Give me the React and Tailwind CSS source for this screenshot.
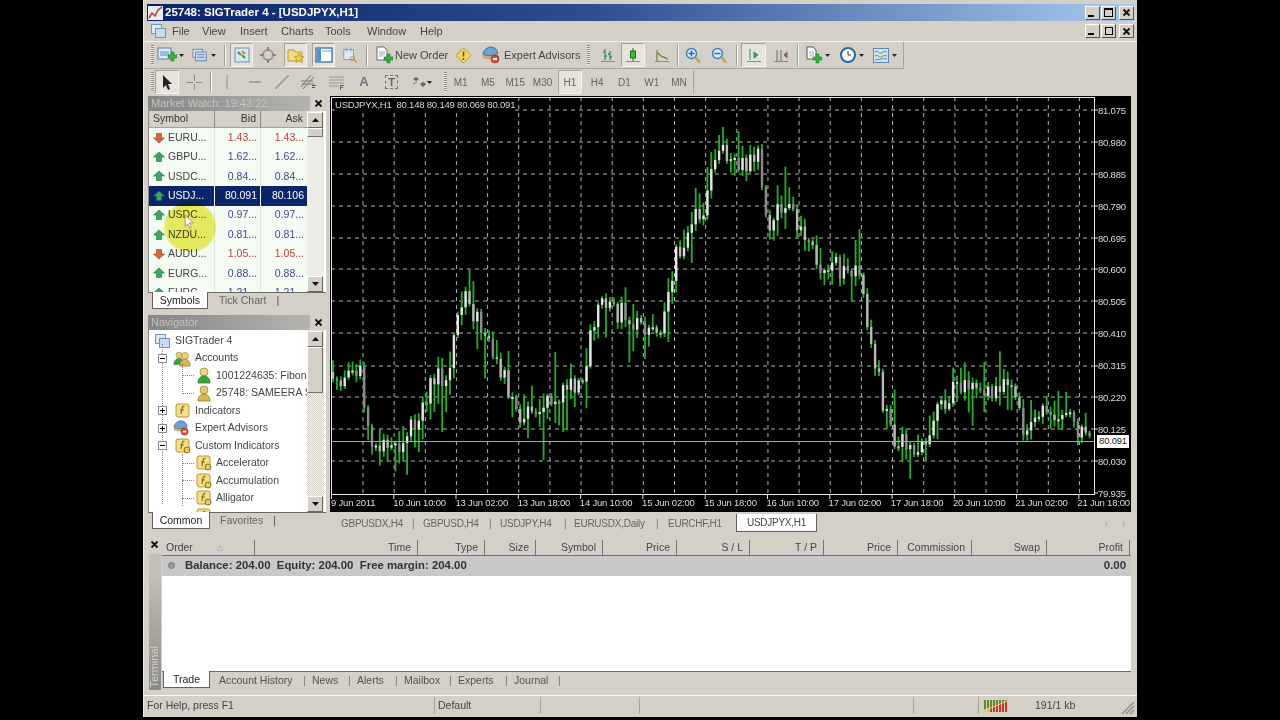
import React from "react";

const F = { fontFamily: '"Liberation Sans", Arial, sans-serif' };

/* ---------- chart data ---------- */
const KEY = [[0,275],[13,285],[28,272],[40,340],[63,350],[83,325],[98,290],[118,275],[133,195],[148,225],[168,265],[188,315],[213,305],[238,295],[253,275],[268,205],[288,215],[308,225],[328,235],[343,165],[363,125],[373,110],[388,45],[408,75],[428,60],[438,130],[458,105],[468,135],[488,170],[508,170],[528,175],[543,255],[558,335],[578,355],[598,335],[613,305],[633,280],[653,300],[678,285],[693,330],[718,315],[738,325],[758,340]];
function priceAt(x) {
  for (let i = 0; i < KEY.length - 1; i++) {
    const [a, p] = KEY[i], [b, q] = KEY[i + 1];
    if (x >= a && x <= b) return p + ((q - p) * (x - a)) / (b - a);
  }
  return 340;
}
function buildCandles() {
  let s = 90817;
  const r = () => ((s = (s * 16807) % 2147483647) / 2147483647);
  const out = [];
  let prev = priceAt(0);
  for (let x = 2; x < 760; x += 3.9) {
    const c = priceAt(x) + (r() - 0.5) * 24;
    const top = Math.min(prev, c);
    const bh = Math.max(2, Math.abs(prev - c));
    const up = 2 + r() * r() * r() * 60;
    const dn = 2 + r() * r() * r() * 56;
    out.push({ x, top, bh, hi: top - up, lo: top + bh + dn, bull: c < prev, g: r() });
    prev = c;
  }
  return out;
}
const CANDLES = buildCandles();
const VX = Array.from({ length: 24 }, (_, i) => 32 + i * 31.15);
const HY = [13, 45, 77, 109, 141, 172, 204, 236, 269, 300, 332, 364];

function Chart() {
  return (
    <svg width="764" height="398" className="block overflow-visible">
      <rect width="764" height="398" fill="#000" />
      {VX.map((x) => (
        <line key={x} x1={x} x2={x} y1="0" y2="398" stroke="#b4b4b4" strokeDasharray="4 4" />
      ))}
      {HY.map((y) => (
        <line key={y} x1="0" x2="764" y1={y} y2={y} stroke="#b4b4b4" strokeDasharray="4 4" />
      ))}
      {CANDLES.map((c, i) => (
        <line key={i} x1={c.x} x2={c.x} y1={c.hi} y2={c.lo} stroke="#1fb02a" strokeWidth="1.8" />
      ))}
      {CANDLES.map((c, i) => (
        <rect key={i} x={c.x - 1.2} y={c.top} width="2.4" height={c.bh} fill={c.bull ? "#e6e6e6" : c.g > 0.5 ? "#8c8c8c" : "#b8b8b8"} />
      ))}
      <line x1="0" x2="764" y1="344.5" y2="344.5" stroke="#a8a8a8" />
      <line x1="0.5" x2="0.5" y1="0" y2="398" stroke="#e8e8e8" />
      <line x1="0" x2="764" y1="0.5" y2="0.5" stroke="#e8e8e8" />
      <line x1="763.5" x2="763.5" y1="0" y2="398" stroke="#e8e8e8" />
      <line x1="0" x2="764" y1="397.5" y2="397.5" stroke="#e8e8e8" />
      {[0.5, 62.8, 125, 187.3, 249.6, 311.9, 374.2, 436.5, 498.8, 561, 623.3, 685.6, 747.9].map((x) => (
        <line key={x} x1={x} x2={x} y1="398" y2="402" stroke="#e8e8e8" />
      ))}
      {[13, 45, 77, 109, 141, 172, 204, 236, 269, 300, 332, 364, 396].map((y) => (
        <line key={y} x1="764" x2="767" y1={y} y2={y} stroke="#e8e8e8" />
      ))}
    </svg>
  );
}

/* ---------- icons ---------- */
const Caret = () => (
  <svg width="5" height="3" className="shrink-0"><path d="M0 0h5L2.5 3z" fill="#222" /></svg>
);
const Sep = ({ className = "" }) => <div className={`w-[2px] h-[21px] shrink-0 border-l border-r border-l-[#a09c94] border-r-white ${className}`} />;
const Grip = ({ className = "" }) => <div className={`w-[3px] h-[20px] shrink-0 bg-[repeating-linear-gradient(#8d8a82_0_1px,#eeeae2_1px_2px)] ${className}`} />;
const NewChart = () => (
  <svg width="20" height="18" viewBox="0 0 20 18">
    <rect x="1" y="2" width="13" height="11" fill="#dfe9f7" stroke="#5a7fae" />
    <rect x="3" y="5" width="9" height="5" fill="#9cbbe0" />
    <path d="M11 9h3V6h3v3h3v3h-3v3h-3v-3h-3z" fill="#35b535" stroke="#1b7a1b" strokeWidth=".6" />
  </svg>
);
const Profiles = () => (
  <svg width="16" height="15" viewBox="0 0 18 16">
    <rect x="1" y="1" width="11" height="9" fill="#dce7f6" stroke="#5a7fae" />
    <rect x="4" y="4" width="12" height="10" fill="#c5d6ee" stroke="#5a7fae" />
    <path d="M6 7h8M6 10h8" stroke="#5a7fae" />
  </svg>
);
const MarketIcon = () => (
  <svg width="16" height="16" viewBox="0 0 16 16">
    <rect x="1" y="1" width="14" height="14" fill="#d6e6f7" stroke="#6b8fb8" />
    <path d="M4 5l3 3M8 8l3 3" stroke="#2e9e2e" strokeWidth="2" />
    <path d="M8 4l3 3" stroke="#d8862a" strokeWidth="2" />
  </svg>
);
const Target = () => (
  <svg width="16" height="16" viewBox="0 0 16 16">
    <circle cx="8" cy="8" r="5" fill="none" stroke="#9a9a92" strokeWidth="2" />
    <path d="M8 0v4M8 12v4M0 8h4M12 8h4" stroke="#8a867d" strokeWidth="2" />
  </svg>
);
const FolderStar = () => (
  <svg width="18" height="17" viewBox="0 0 18 17">
    <path d="M1 3h6l1 2h7v9H1z" fill="#f2dd86" stroke="#b59a3a" />
    <path d="M12 6l1.6 3.2 3.4.5-2.5 2.4.6 3.4-3.1-1.6-3.1 1.6.6-3.4L7 9.7l3.4-.5z" fill="#f5c83c" stroke="#a8861e" strokeWidth=".6" />
  </svg>
);
const PanelIcon = () => (
  <svg width="18" height="16" viewBox="0 0 18 16">
    <rect x="1" y="1" width="16" height="14" fill="#fff" stroke="#3f76ad" strokeWidth="1.4" />
    <rect x="2" y="2" width="4" height="12" fill="#4f92cf" />
    <rect x="7" y="3" width="9" height="2" fill="#b9d2ec" />
  </svg>
);
const NoteIcon = () => (
  <svg width="18" height="18" viewBox="0 0 18 18">
    <rect x="2" y="3" width="11" height="11" fill="#dbe7f5" stroke="#7a98bd" />
    <path d="M5 1v4M10 1v4" stroke="#7a98bd" />
    <circle cx="12" cy="13" r="2.5" fill="none" stroke="#b9943b" />
    <path d="M14 15l2.500 2.500" stroke="#b9943b" strokeWidth="1.5" />
  </svg>
);
const NewOrder = () => (
  <svg width="18" height="18" viewBox="0 0 18 18">
    <path d="M2 1h7l3 3v10H2z" fill="#fff" stroke="#6d6d6d" />
    <path d="M4 6h6M4 8h6M4 10h4" stroke="#99aaaa" />
    <path d="M9 11h3V8h3v3h3v3h-3v3h-3v-3H9z" fill="#2eb33a" stroke="#1a7a22" strokeWidth=".6" />
  </svg>
);
const Warn = () => (
  <svg width="17" height="17" viewBox="0 0 17 17">
    <path d="M8.500 1L16 8.500 8.500 16 1 8.500z" fill="#f5d65a" stroke="#b89a2d" />
    <path d="M8.500 4.500v5M8.500 11v2" stroke="#6a5410" strokeWidth="1.6" />
  </svg>
);
const Expert = ({ size = 18 }) => (
  <svg width={size} height={size} viewBox="0 0 18 18">
    <path d="M1 8c1-5 5-7 8-7s6 2 7 6c-4 3-10 4-15 1z" fill="#6aa3d8" stroke="#3f6f9e" />
    <path d="M2 9c4 2 9 2 13-1l1 2c-4 3-10 3-15 1z" fill="#e5c35c" stroke="#9c7f22" strokeWidth=".6" />
    <circle cx="13" cy="13" r="4" fill="#d84a32" stroke="#8c2a18" strokeWidth=".6" />
    <rect x="11" y="12" width="4" height="2" fill="#fff" />
  </svg>
);
const Bars = ({ kind }) => (
  <svg width="14" height="15" viewBox="0 0 14 15">
    {kind === "bar" && <path d="M4 1v11M2 4h2M4 8h2M9 3v9M7 6h2M9 9h2" stroke="#2f8f6a" fill="none" strokeWidth="1.3" />}
    {kind === "candle" && <path d="M7 0v13" stroke="#2b6e2b" />}
    {kind === "candle" && <rect x="4.500" y="3" width="5" height="7" fill="#35c235" stroke="#1f6a1f" />}
    {kind === "line" && <path d="M2 2v11M2 5c3 0 3 4 6 4s2 2 5 2" stroke="#7a8a35" fill="none" strokeWidth="1.3" />}
    {kind === "shift" && <path d="M3 1v11M7 4l4 3-4 3z" stroke="#2f8f6a" fill="#2fa84f" strokeWidth="1" />}
    {kind === "auto" && <path d="M3 2v11M7 2v11M13 4l-3 3 3 3z" stroke="#6c6c6c" fill="#c8473a" strokeWidth="1" />}
    <path d="M0 13.500h14" stroke="#8a8a82" />
  </svg>
);
const Zoom = ({ plus }) => (
  <svg width="16" height="17" viewBox="0 0 16 17">
    <circle cx="6.500" cy="6.500" r="5" fill="#d7ecfa" stroke="#3a83bd" strokeWidth="1.5" />
    <path d="M3.500 6.500h6" stroke="#2d6ea6" strokeWidth="1.5" />
    {plus && <path d="M6.500 3.500v6" stroke="#2d6ea6" strokeWidth="1.5" />}
    <path d="M10.500 10.500l4.500 5" stroke="#c2a24a" strokeWidth="2.4" />
  </svg>
);
const DocPlus = () => (
  <svg width="16" height="18" viewBox="0 0 16 18">
    <path d="M1 1h6l3 3v9H1z" fill="#fff" stroke="#555" />
    <path d="M3 5h5v6H3z" fill="#d6d6d6" />
    <path d="M7 11h3V8h3v3h3v3h-3v3h-3v-3H7z" fill="#2eb33a" stroke="#1a7a22" strokeWidth=".5" />
  </svg>
);
const Clock = () => (
  <svg width="16" height="16" viewBox="0 0 16 16">
    <circle cx="8" cy="8" r="7" fill="#fff" stroke="#23689f" strokeWidth="2" />
    <path d="M8 4v4h3" stroke="#333" fill="none" />
  </svg>
);
const Tmpl = () => (
  <svg width="16" height="15" viewBox="0 0 16 15">
    <rect x=".5" y=".5" width="15" height="14" fill="#cfe2f5" stroke="#5f88b5" />
    <path d="M2 4c3-2 4 2 6 1s3-2 6-1M2 8c3-2 4 2 6 1s3-2 6-1M2 12c3-1 4 0 6-1s3 0 6 0" fill="none" stroke="#6a8d5c" />
  </svg>
);
const Pressed = ({ className = "", children }) => (
  <div className={`h-[24px] flex items-center justify-center shrink-0 bg-[#e6e3dc] border border-t-[#a5a29a] border-l-[#a5a29a] border-r-[#f4f2ec] border-b-[#f4f2ec] ${className}`}>{children}</div>
);
const Cell = ({ className = "", children }) => (
  <div className={`flex items-center justify-center shrink-0 ${className}`}>{children}</div>
);
const Arrow = ({ up }) => (
  <svg width="12" height="12" viewBox="0 0 12 12" className="shrink-0">
    {up ? <path d="M6 1l5.500 5H8.500v4.500h-5V6H.5z" fill="#3aa860" stroke="#1e6e38" strokeWidth=".6" /> : <path d="M6 11l5.500-5H8.500V1.500h-5V6H.5z" fill="#e0633c" stroke="#97391c" strokeWidth=".6" />}
  </svg>
);
const ScrollBtn = ({ up }) => (
  <div className="w-[16px] h-[16px] bg-[#d4d0c8] border border-t-white border-l-white border-r-[#6d6a63] border-b-[#6d6a63] flex items-center justify-center shrink-0">
    <svg width="7" height="4"><path d={up ? "M0 4h7L3.500 0z" : "M0 0h7L3.500 4z"} fill="#111" /></svg>
  </div>
);
const Folder = ({ f = true, gear }) => (
  <svg width="16" height="16" viewBox="0 0 16 16" className="shrink-0">
    <rect x="1" y="1" width="13" height="13" rx="2" fill="#f3df8a" stroke="#b9982f" />
    {f && <path d="M9.500 3.500C7.500 3 7 4.500 6.800 6.500L6 11M5 7h4" fill="none" stroke="#8a6d15" strokeWidth="1.2" />}
    {gear && <circle cx="12" cy="12" r="3" fill="#e8c850" stroke="#8a6d15" />}
  </svg>
);
const Person = ({ green }) => (
  <svg width="16" height="17" viewBox="0 0 16 17" className="shrink-0">
    <circle cx="8" cy="5" r="4" fill={green ? "#f2d27a" : "#e9c66c"} stroke="#9a7a24" strokeWidth=".7" />
    <path d="M2 16c0-5 3-7 6-7s6 2 6 7z" fill={green ? "#38a83e" : "#d9b552"} stroke={green ? "#1d6e22" : "#8e6f1f"} strokeWidth=".7" />
  </svg>
);
const People = () => (
  <svg width="19" height="17" viewBox="0 0 22 18" className="shrink-0">
    <circle cx="7" cy="5" r="3.500" fill="#f0cf74" stroke="#8f7320" strokeWidth=".6" />
    <path d="M1 16c0-5 3-7 6-7s6 2 6 7z" fill="#3ba640" stroke="#1d6e22" strokeWidth=".6" />
    <circle cx="14" cy="6" r="4" fill="#f0cf74" stroke="#8f7320" strokeWidth=".6" />
    <path d="M8 18c0-6 3-8 6-8s6 2 6 8z" fill="#d9b552" stroke="#8e6f1f" strokeWidth=".6" />
  </svg>
);
const Box = ({ plus }) => (
  <div className="w-[9px] h-[9px] border border-[#8a8a8a] bg-white relative shrink-0">
    <div className="absolute left-[1px] top-[3px] w-[5px] h-[1px] bg-black" />
    {plus && <div className="absolute left-[3px] top-[1px] w-[1px] h-[5px] bg-black" />}
  </div>
);
const X = () => (
  <svg width="9" height="9" viewBox="0 0 9 9"><path d="M1.500 1.500l6 6M7.500 1.500l-6 6" stroke="#111" strokeWidth="1.8" /></svg>
);
const WinBtn = ({ children, className = "" }) => (
  <div className={`w-[15px] h-[14px] bg-[#d4d0c8] border border-t-white border-l-white border-r-[#55524c] border-b-[#55524c] flex items-center justify-center ${className}`}>{children}</div>
);
const MinG = () => <div className="w-[6px] h-[2px] bg-black mt-[6px] mr-[3px]" />;
function SmallIcon() {
  return (
    <svg width="15" height="14" viewBox="0 0 15 14" className="shrink-0">
      <rect x=".5" y=".5" width="10" height="9" fill="#dfe9f7" stroke="#6d93c0" />
      <rect x="4.500" y="4.500" width="10" height="9" fill="#c7dbf2" stroke="#6d93c0" />
    </svg>
  );
}

/* ---------- data ---------- */
const WATCH = [
  ["EURU...", "1.43...", "1.43...", false],
  ["GBPU...", "1.62...", "1.62...", true],
  ["USDC...", "0.84...", "0.84...", true],
  ["USDJ...", "80.091", "80.106", true, true],
  ["USDC...", "0.97...", "0.97...", true],
  ["NZDU...", "0.81...", "0.81...", true],
  ["AUDU...", "1.05...", "1.05...", false],
  ["EURG...", "0.88...", "0.88...", true],
  ["EURC...", "1.21...", "1.21...", true],
];
const PRICES = ["81.075","80.980","80.885","80.790","80.695","80.600","80.505","80.410","80.315","80.220","80.125","80.030","79.935"];
const TIMES = ["10 Jun 10:00","13 Jun 02:00","13 Jun 18:00","14 Jun 10:00","15 Jun 02:00","15 Jun 18:00","16 Jun 10:00","17 Jun 02:00","17 Jun 18:00","20 Jun 10:00","21 Jun 02:00","21 Jun 18:00"];
const COLS = [
  ["Time", "w-[163px]"], ["Type", "w-[67px]"], ["Size", "w-[51px]"], ["Symbol", "w-[67px]"], ["Price", "w-[74px]"],
  ["S / L", "w-[73px]"], ["T / P", "w-[74px]"], ["Price", "w-[74px]"], ["Commission", "w-[74px]"], ["Swap", "w-[75px]"], ["Profit", "w-[83px]"],
];
const MENU = [["File","w-[30px]"],["View","w-[38px]"],["Insert","w-[41px]"],["Charts","w-[44px]"],["Tools","w-[42px]"],["Window","w-[53px]"],["Help","w-[30px]"]];
const PERIODS = ["M1","M5","M15","M30","H1","H4","D1","W1","MN"];
const CHART_TABS = [
  ["GBPUSDX,H4", "ml-[11px] w-[61px]"],
  ["GBPUSD,H4", "ml-[9px] w-[56px]"],
  ["USDJPY,H4", "ml-[9px] w-[54px]"],
  ["EURUSDX,Daily", "ml-[8px] w-[72px]"],
];
const TERM_TABS = [
  ["Account History", "ml-[9px] w-[74px]"],
  ["News", "ml-[7px] w-[26px]"],
  ["Alerts", "ml-[7px] w-[28px]"],
  ["Mailbox", "ml-[7px] w-[35px]"],
  ["Experts", "ml-[7px] w-[37px]"],
  ["Journal", "ml-[7px] w-[34px]"],
];

const PanelTitle = ({ children }) => (
  <div className="h-[15px] flex items-center justify-between pl-[3px] pr-[3px] bg-[linear-gradient(90deg,#858585,#b9b8b4)] text-[#c4c4bf] text-[11px] shrink-0">
    <span className="whitespace-nowrap">{children}</span>
    <span className="bg-[#d4d0c8] w-[16px] h-[15px] flex items-center justify-center -mr-[3px]"><X /></span>
  </div>
);
const BottomTabs = ({ a, b, w, g }) => (
  <div className="h-[19px] flex items-start text-[10.500px] leading-[15px] text-[#66645e] border-t border-[#6b6861] shrink-0 pl-[4px]">
    <div className={`h-[17px] bg-white border-r border-b border-l border-[#66635c] -mt-[1px] flex items-center justify-center text-[#222] shrink-0 ${w}`}>{a}</div>
    <span className={`whitespace-nowrap ${g}`}>{b}</span>
    <span className="ml-[10px] text-[#55524c]">|</span>
  </div>
);
const TreeRow = ({ indent, children }) => (
  <div className={`h-[17.500px] flex items-center whitespace-nowrap overflow-hidden ${indent}`}>{children}</div>
);
const AXIS = "text-[9.500px] tracking-[-0.2px]";

export default function App() {
  return (
    <div style={F} className="h-[720px] bg-black flex justify-center overflow-hidden text-[10.500px] text-[#333]">
      <div className="w-[994px] h-[717px] bg-[#d4d0c8] flex flex-col pt-[4px] relative border-l border-[#efece5]">
        {/* title */}
        <div className="h-[17px] mx-[3px] flex items-center bg-[linear-gradient(90deg,#0a246a_0%,#2e4e90_45%,#a6caf0_100%)] shrink-0">
          <svg width="15" height="14" viewBox="0 0 15 14" className="ml-[1px]">
            <rect width="15" height="14" fill="#e8edf5" />
            <path d="M1 12l3-5 3 3 3-6 4-3" fill="none" stroke="#c0452e" strokeWidth="1.6" />
          </svg>
          <span className="ml-[2px] text-white font-bold text-[11.500px]">25748: SIGTrader 4 - [USDJPYX,H1]</span>
          <div className="ml-auto flex gap-[1px]">
            <WinBtn><MinG /></WinBtn>
            <WinBtn className="mr-[2px]"><div className="w-[9px] h-[9px] border border-black border-t-2" /></WinBtn>
            <WinBtn><X /></WinBtn>
          </div>
        </div>
        {/* menu */}
        <div className="h-[21px] flex items-center shrink-0 border-b border-[#f5f3ee]">
          <Cell className="w-[15px] ml-[7px]"><SmallIcon /></Cell>
          <div className="flex ml-[6px] text-[11px] text-[#444]">
            {MENU.map(([t, c]) => (
              <span key={t} className={c}>{t}</span>
            ))}
          </div>
          <div className="ml-auto flex gap-[1px] pr-[3px]">
            <WinBtn><MinG /></WinBtn>
            <WinBtn className="mr-[2px]"><div className="w-[8px] h-[8px] border border-black" /></WinBtn>
            <WinBtn><X /></WinBtn>
          </div>
        </div>
        {/* toolbar 1 */}
        <div className="h-[27px] w-[760px] flex items-center shrink-0 border-b border-r border-[#a8a59d] text-[11px] text-[#444] whitespace-nowrap">
          <Grip className="ml-[7px]" />
          <Cell className="ml-[3px] w-[20px]"><NewChart /></Cell><Cell className="ml-[1px] w-[6px]"><Caret /></Cell>
          <Cell className="ml-[8px] w-[16px]"><Profiles /></Cell><Cell className="ml-[2px] w-[6px]"><Caret /></Cell>
          <Sep className="ml-[8px]" />
          <Pressed className="ml-[4px] w-[23px]"><MarketIcon /></Pressed>
          <Cell className="ml-[7px] w-[16px]"><Target /></Cell>
          <Pressed className="ml-[8px] w-[23px]"><FolderStar /></Pressed>
          <Pressed className="ml-[5px] w-[23px]"><PanelIcon /></Pressed>
          <Cell className="ml-[7px] w-[16px]"><NoteIcon /></Cell>
          <Sep className="ml-[8px]" />
          <Cell className="ml-[7px] w-[18px]"><NewOrder /></Cell>
          <span className="ml-[2px] w-[52px] shrink-0">New Order</span>
          <Cell className="ml-[7px] w-[18px]"><Warn /></Cell>
          <Cell className="ml-[10px] w-[18px]"><Expert /></Cell>
          <span className="ml-[4px] w-[76px] shrink-0">Expert Advisors</span>
          <Grip className="ml-[7px]" />
          <Cell className="ml-[11px] w-[14px]"><Bars kind="bar" /></Cell>
          <Pressed className="ml-[6px] w-[24px]"><Bars kind="candle" /></Pressed>
          <Cell className="ml-[10px] w-[14px]"><Bars kind="line" /></Cell>
          <Sep className="ml-[8px]" />
          <Cell className="ml-[6px] w-[16px]"><Zoom plus /></Cell>
          <Cell className="ml-[10px] w-[16px]"><Zoom /></Cell>
          <Sep className="ml-[9px]" />
          <Pressed className="ml-[3px] w-[25px]"><Bars kind="shift" /></Pressed>
          <Cell className="ml-[8px] w-[14px]"><Bars kind="auto" /></Cell>
          <Sep className="ml-[9px]" />
          <Cell className="ml-[7px] w-[16px]"><DocPlus /></Cell><Cell className="ml-[2px] w-[6px]"><Caret /></Cell>
          <Cell className="ml-[10px] w-[16px]"><Clock /></Cell><Cell className="ml-[2px] w-[6px]"><Caret /></Cell>
          <Cell className="ml-[9px] w-[16px]"><Tmpl /></Cell><Cell className="ml-[2px] w-[6px]"><Caret /></Cell>
        </div>
        {/* toolbar 2 */}
        <div className="h-[26px] flex items-center shrink-0 text-[10px] text-[#66645e]">
          <Grip className="ml-[7px]" />
          <Pressed className="ml-[1px] w-[24px]">
            <svg width="11" height="15" viewBox="0 0 11 15"><path d="M1 0v13l3-3 2 5 2-1-2-5h4z" fill="#222" /></svg>
          </Pressed>
          <Cell className="ml-[8px] w-[15px]"><svg width="15" height="15"><path d="M7.500 0v6M7.500 9v6M0 7.500h6M9 7.500h6" stroke="#8a867d" /></svg></Cell>
          <Sep className="ml-[8px]" />
          <Cell className="ml-[13px] w-[4px]"><svg width="2" height="14"><path d="M1 0v14" stroke="#9a9890" strokeWidth="1.2" /></svg></Cell>
          <Cell className="ml-[20px] w-[12px]"><svg width="12" height="2"><path d="M0 1h12" stroke="#8a867d" strokeWidth="1.2" /></svg></Cell>
          <Cell className="ml-[14px] w-[14px]"><svg width="14" height="14"><path d="M0 14L14 0" stroke="#8a867d" strokeWidth="1.2" /></svg></Cell>
          <Cell className="ml-[11px] w-[17px]"><svg width="17" height="16" viewBox="0 0 17 16"><path d="M1 13L11 1M3 15L14 3M1 7h12M2 10h12" stroke="#77736a" fill="none" /><path d="M12 11h4v1h-4zM12 13h3v1h-3z" fill="#55524c" /></svg></Cell>
          <Cell className="ml-[12px] w-[15px]"><svg width="15" height="15" viewBox="0 0 15 15"><path d="M0 2h15M0 5h15M0 8h15M0 11h10" stroke="#9a9890" /><path d="M11 10h4v1h-3v1h2v1h-2v2h-1z" fill="#66645e" /></svg></Cell>
          <Cell className="ml-[16px] w-[8px] text-[13px] font-bold text-[#6c7480]">A</Cell>
          <Cell className="ml-[17px] w-[13px]"><div className="w-[13px] h-[14px] border border-dashed border-[#77736a] flex items-center justify-center text-[11px] font-bold text-[#666]">T</div></Cell>
          <Cell className="ml-[14px] w-[14px]"><svg width="14" height="12" viewBox="0 0 14 12"><path d="M1 3l3-2 3 2-3 2zM8 8l3-2 3 2-3 3z" fill="#666" /><path d="M1 8l4-2" stroke="#777" /></svg></Cell>
          <Cell className="w-[6px]"><Caret /></Cell>
          <Grip className="ml-[12px]" />
          {PERIODS.map((p) => (
            <Cell key={p} className="w-[27.300px]">
              {p === "H1" ? <Pressed className="w-[24px]">{p}</Pressed> : p}
            </Cell>
          ))}
          <div className="w-[1px] h-[24px] bg-[#a8a59d]" />
        </div>

        {/* main */}
        <div className="h-[438px] flex shrink-0 mt-[1px]">
          {/* left */}
          <div className="w-[178px] ml-[4px] flex flex-col shrink-0">
            {/* market watch */}
            <div className="h-[215px] flex flex-col relative">
              <PanelTitle>Market Watch: 19:43:22</PanelTitle>
              <div className="h-[181px] flex overflow-hidden border-l border-[#8d8a82] bg-white">
                <div className="w-[158px] flex flex-col overflow-hidden">
                  <div className="h-[17px] flex bg-[#d4d0c8] shrink-0 text-[#333] border-b border-[#a5a29a]">
                    <div className="w-[66px] pl-[4px] flex items-center border-r border-[#8d8a82]">Symbol</div>
                    <div className="w-[46px] pr-[4px] flex items-center justify-end border-r border-[#8d8a82]">Bid</div>
                    <div className="w-[46px] pr-[4px] flex items-center justify-end">Ask</div>
                  </div>
                  {WATCH.map(([s, b, a, up, sel], i) => (
                    <div key={i} className={`h-[19.400px] shrink-0 flex items-center ${sel ? "bg-[#0a246a] text-white" : "bg-[#f3fbf3]"}`}>
                      <div className={`w-[66px] flex items-center pl-[4px] gap-[3px] h-full border-r ${sel ? "border-white" : "border-[#e0e4dc]"}`}>
                        <Arrow up={up} />
                        <span className={sel ? "text-white" : "text-[#444]"}>{s}</span>
                      </div>
                      <div className={`w-[46px] pr-[3px] h-full flex items-center justify-end border-r ${sel ? "border-white text-white" : up ? "border-[#e0e4dc] text-[#46469a]" : "border-[#e0e4dc] text-[#c23c3c]"}`}>{b}</div>
                      <div className={`w-[46px] pr-[3px] h-full flex items-center justify-end ${sel ? "text-white" : up ? "text-[#46469a]" : "text-[#c23c3c]"}`}>{a}</div>
                    </div>
                  ))}
                </div>
                <div className="w-[17px] flex flex-col bg-[#ecebe6] pt-[1px] shrink-0">
                  <ScrollBtn up />
                  <div className="h-[9px] w-[16px] bg-[#d4d0c8] border border-t-white border-l-white border-r-[#77736a] border-b-[#77736a]" />
                  <div className="flex-1" />
                  <ScrollBtn />
                </div>
              </div>
              <BottomTabs a="Symbols" b="Tick Chart" w="w-[56px]" g="ml-[11px]" />
              <div className="absolute left-[16px] top-[106px] w-[52px] h-[50px] rounded-full bg-[radial-gradient(circle,#efed60_60%,#f6f5a0_85%,#fbfad0)] mix-blend-multiply pointer-events-none" />
              <svg width="11" height="14" viewBox="0 0 12 16" className="absolute left-[36px] top-[119px]">
                <path d="M1 0v13l3-3 2 5 2-1-2-5h4z" fill="#fff" stroke="#666" strokeWidth=".7" />
              </svg>
            </div>
            {/* navigator */}
            <div className="h-[216px] mt-[4px] flex flex-col">
              <PanelTitle>Navigator</PanelTitle>
              <div className="h-[182px] flex overflow-hidden border-l border-[#8d8a82] bg-white">
                <div className="w-[158px] overflow-hidden pt-[2px] text-[#444] relative">
                  <div className="absolute left-[13px] top-[14px] h-[160px] border-l border-dotted border-[#888]" />
                  <div className="absolute left-[33px] top-[34px] h-[30px] border-l border-dotted border-[#888]" />
                  <div className="absolute left-[33px] top-[45px] w-[12px] border-t border-dotted border-[#888]" />
                  <div className="absolute left-[33px] top-[63px] w-[12px] border-t border-dotted border-[#888]" />
                  <div className="absolute left-[33px] top-[124px] h-[52px] border-l border-dotted border-[#888]" />
                  <div className="absolute left-[33px] top-[133px] w-[12px] border-t border-dotted border-[#888]" />
                  <div className="absolute left-[33px] top-[150px] w-[12px] border-t border-dotted border-[#888]" />
                  <div className="absolute left-[33px] top-[168px] w-[12px] border-t border-dotted border-[#888]" />
                  <TreeRow indent="pl-[6px]"><SmallIcon /><span className="ml-[5px]">SIGTrader 4</span></TreeRow>
                  <TreeRow indent="pl-[9px]"><Box /><span className="ml-[6px]"><People /></span><span className="ml-[3px]">Accounts</span></TreeRow>
                  <TreeRow indent="pl-[47px]"><Person green /><span className="ml-[4px]">1001224635: Fibonacci</span></TreeRow>
                  <TreeRow indent="pl-[47px]"><Person /><span className="ml-[4px]">25748: SAMEERA SAMPATH</span></TreeRow>
                  <TreeRow indent="pl-[9px]"><Box plus /><span className="ml-[8px]"><Folder /></span><span className="ml-[4px]">Indicators</span></TreeRow>
                  <TreeRow indent="pl-[9px]"><Box plus /><span className="ml-[6px]"><Expert size={16} /></span><span className="ml-[6px]">Expert Advisors</span></TreeRow>
                  <TreeRow indent="pl-[9px]"><Box /><span className="ml-[8px]"><Folder gear /></span><span className="ml-[4px]">Custom Indicators</span></TreeRow>
                  <TreeRow indent="pl-[47px]"><Folder gear /><span className="ml-[4px]">Accelerator</span></TreeRow>
                  <TreeRow indent="pl-[47px]"><Folder gear /><span className="ml-[4px]">Accumulation</span></TreeRow>
                  <TreeRow indent="pl-[47px]"><Folder gear /><span className="ml-[4px]">Alligator</span></TreeRow>
                  <TreeRow indent="pl-[47px]"><Folder gear /></TreeRow>
                </div>
                <div className="w-[17px] flex flex-col bg-[repeating-conic-gradient(#d4d0c8_0_25%,#f5f4f0_0_50%)] bg-[length:2px_2px] shrink-0 pt-[1px]">
                  <ScrollBtn up />
                  <div className="h-[46px] w-[16px] bg-[#d4d0c8] border border-t-white border-l-white border-r-[#77736a] border-b-[#77736a]" />
                  <div className="flex-1" />
                  <ScrollBtn />
                </div>
              </div>
              <BottomTabs a="Common" b="Favorites" w="w-[58px]" g="ml-[10px]" />
            </div>
          </div>

          {/* chart column */}
          <div className="w-[801px] ml-[4px] flex flex-col shrink-0">
            <div className={`h-[416px] bg-black flex flex-col relative pt-[1px] pl-[1px] text-[#dcdcdc] ${AXIS}`}>
              <div className="flex h-[398px]">
                <Chart />
                <div className="flex-1 flex flex-col pl-[3px] relative pt-[7px]">
                  {PRICES.map((p) => (
                    <div key={p} className="h-[31.900px] shrink-0 leading-[13px]">{p}</div>
                  ))}
                  <div className="absolute left-[2px] top-[338px] w-[32px] h-[13px] bg-white text-[#222] flex items-center justify-center">80.091</div>
                </div>
              </div>
              <div className="flex h-[17px] items-center whitespace-nowrap">
                <span className="w-[62.300px] shrink-0">9 Jun 2011</span>
                {TIMES.map((t) => (
                  <span key={t} className="w-[62.200px] shrink-0">{t}</span>
                ))}
              </div>
              <div className="absolute left-[5px] top-[2px] bg-black text-[#d8d8d8] whitespace-pre">USDJPYX,H1  80.148 80.149 80.069 80.091</div>
            </div>
            <div className="h-[19px] mt-[2px] flex items-start text-[#66645e] text-[10px] tracking-[-0.25px]">
              {CHART_TABS.map(([t, c]) => (
                <React.Fragment key={t}>
                  <span className={`${c} mt-[2px] whitespace-nowrap shrink-0`}>{t}</span>
                  <span className="ml-[10px] mt-[2px] text-[#77736a] w-[2px] shrink-0">|</span>
                </React.Fragment>
              ))}
              <span className="ml-[10px] w-[56px] mt-[2px] whitespace-nowrap shrink-0">EURCHF,H1</span>
              <div className="ml-[12px] w-[81px] h-[18px] bg-white border-r border-b border-l border-[#66635c] flex items-center justify-center text-[#444] shrink-0">USDJPYX,H1</div>
              <span className="ml-auto mr-[14px] mt-[2px] text-[#a09d95]">‹</span>
              <span className="mr-[6px] mt-[2px] text-[#a09d95]">›</span>
            </div>
          </div>
        </div>

        {/* terminal */}
        <div className="h-[156px] mt-[3px] flex shrink-0 pl-[3px] relative">
          <div className="w-[15px] flex flex-col items-center shrink-0">
            <div className="h-[13px] mt-[1px] flex items-center"><X /></div>
            <div className="flex-1 w-[12px] mt-[3px] mb-[3px] bg-[linear-gradient(0deg,#8b8b86,#c2bfb7_85%)] flex items-end justify-center">
              <span className="[writing-mode:vertical-rl] rotate-180 text-[#cfcfca] text-[11px] mb-[2px]">Terminal</span>
            </div>
          </div>
          <div className="w-[969px] flex flex-col shrink-0">
            <div className="h-[16px] mt-[3px] flex bg-[#d4d0c8] text-[#444] border-b border-[#77736a] shrink-0">
              <div className="w-[93px] pl-[4px] flex items-center border-r border-[#77736a] shrink-0">Order<span className="ml-[24px] text-[8px] text-[#a09d95]">△</span></div>
              {COLS.map(([t, w], i) => (
                <div key={i} className={`${w} pr-[6px] flex items-center justify-end border-r border-[#77736a] shrink-0 whitespace-nowrap`}>{t}</div>
              ))}
            </div>
            <div className="h-[20px] bg-[#c8c8c8] flex items-center justify-between font-bold text-[#333] text-[11.400px] shrink-0">
              <div className="flex items-center">
                <div className="ml-[6px] w-[7px] h-[7px] rounded-full bg-[#9a9a9a] border border-[#777]" />
                <span className="ml-[10px] whitespace-nowrap">Balance: 204.00&nbsp; Equity: 204.00&nbsp; Free margin: 204.00</span>
              </div>
              <span className="mr-[5px]">0.00</span>
            </div>
            <div className="h-[96px] bg-white shrink-0 border-b border-[#6b6861]" />
            <div className="h-[19px] flex items-start text-[#55524c] text-[10.500px] leading-[16px] shrink-0">
              <div className="ml-[1px] w-[47px] h-[17px] bg-white border-r border-b border-l border-[#66635c] flex items-center justify-center text-[#222] shrink-0 -mt-[1px]">Trade</div>
              {TERM_TABS.map(([t, c]) => (
                <React.Fragment key={t}>
                  <span className={`${c} whitespace-nowrap shrink-0`}>{t}</span>
                  <span className="ml-[10px] w-[2px] shrink-0 text-[#77736a]">|</span>
                </React.Fragment>
              ))}
            </div>
          </div>
        </div>

        {/* status */}
        <div className="h-[22px] mt-[2px] flex items-center shrink-0 border-t border-[#fbfaf6] text-[#444] pb-[2px] relative">
          <span className="ml-[3px] w-[287px]">For Help, press F1</span>
          <div className="w-[1px] h-[17px] bg-[#a8a59d]" />
          <span className="ml-[3px] w-[102px]">Default</span>
          <div className="w-[1px] h-[17px] bg-[#a8a59d]" />
          <div className="w-[98px]" />
          <div className="w-[1px] h-[17px] bg-[#a8a59d]" />
          <div className="w-[273px]" />
          <div className="w-[1px] h-[17px] bg-[#a8a59d]" />
          <div className="w-[64px]" />
          <div className="w-[1px] h-[17px] bg-[#a8a59d]" />
          <svg width="23" height="12" viewBox="0 0 23 12" className="ml-[5px]">
            {Array.from({ length: 8 }, (_, i) => (
              <g key={i}>
                <rect x={i * 3} y="0" width="2" height="12" fill="#5f8a2a" />
                <rect x={i * 3} y={9 - i * 1.2} width="2" height={3 + i * 1.2} fill={i > 1 ? "#c8352a" : "#d8c040"} />
              </g>
            ))}
            <path d="M0 11L23 1" stroke="#e8dd70" strokeWidth="1" />
          </svg>
          <span className="ml-[28px]">191/1 kb</span>
          <svg width="14" height="14" className="ml-auto mr-[2px] self-end" viewBox="0 0 14 14">
            <path d="M13 1L1 13M13 5L5 13M13 9L9 13" stroke="#8a8780" strokeWidth="1.200" />
          </svg>
        </div>
      </div>
    </div>
  );
}
